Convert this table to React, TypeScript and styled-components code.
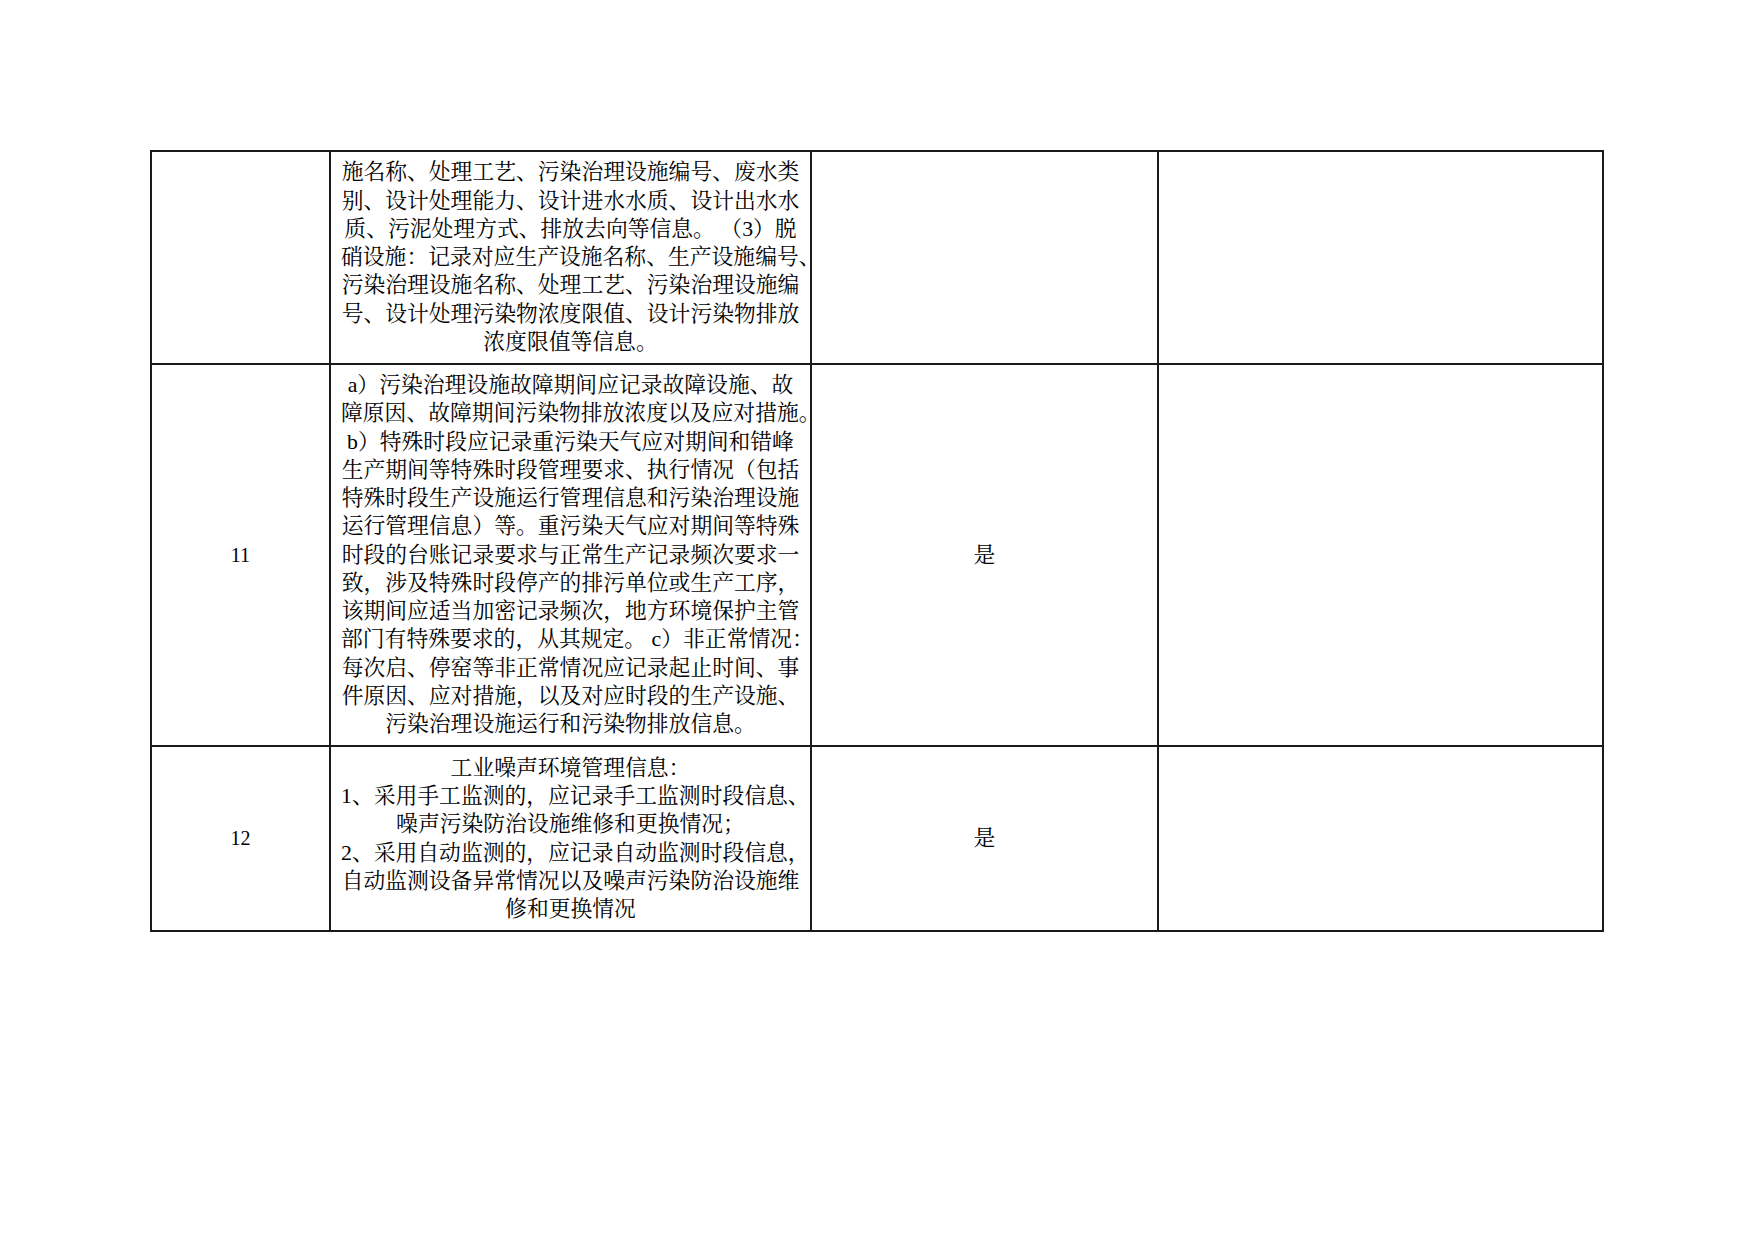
import React from "react";
import styled, { createGlobalStyle } from "styled-components";

const Global = createGlobalStyle`
  html, body { margin: 0; padding: 0; background: #ffffff; }
  body { font-family: "Liberation Serif", "Noto Serif CJK SC", "Noto Sans CJK SC", serif; color: #000; }
`;

const Page = styled.div`
  width: 1754px;
  height: 1241px;
  box-sizing: border-box;
  padding: 150px 0 0 150px;
  background: #fff;
`;

const Table = styled.table`
  border-collapse: collapse;
  table-layout: fixed;
  width: 1454px;
`;

const Row = styled.tr<{ $h: number }>`
  height: ${(p) => p.$h}px;
`;

const Cell = styled.td`
  border: 2px solid #1a1a1a;
  padding: 0 10px;
  vertical-align: middle;
  text-align: center;
  font-size: 21.8px;
  line-height: 28.25px;
  font-family: "Liberation Serif", "Noto Serif CJK SC", "Noto Sans CJK SC", serif;
  color: #000;
  overflow: visible;
`;

const NumCell = styled(Cell)`
  font-size: 20px;
`;

const Line = styled.div`
  white-space: nowrap;
  text-align: center;
`;

type RowData = { no: string; lines: string[]; answer: string; h: number };

const rows: RowData[] = [
  {
    no: "",
    h: 212.5,
    answer: "",
    lines: [
      "施名称、处理工艺、污染治理设施编号、废水类",
      "别、设计处理能力、设计进水水质、设计出水水",
      "质、污泥处理方式、排放去向等信息。 （3）脱",
      "硝设施：记录对应生产设施名称、生产设施编号、",
      "污染治理设施名称、处理工艺、污染治理设施编",
      "号、设计处理污染物浓度限值、设计污染物排放",
      "浓度限值等信息。",
    ],
  },
  {
    no: "11",
    h: 382.5,
    answer: "是",
    lines: [
      " a）污染治理设施故障期间应记录故障设施、故",
      "障原因、故障期间污染物排放浓度以及应对措施。",
      " b）特殊时段应记录重污染天气应对期间和错峰",
      "生产期间等特殊时段管理要求、执行情况（包括",
      "特殊时段生产设施运行管理信息和污染治理设施",
      "运行管理信息）等。重污染天气应对期间等特殊",
      "时段的台账记录要求与正常生产记录频次要求一",
      "致，涉及特殊时段停产的排污单位或生产工序，",
      "该期间应适当加密记录频次，地方环境保护主管",
      "部门有特殊要求的，从其规定。 c）非正常情况：",
      "每次启、停窑等非正常情况应记录起止时间、事",
      "件原因、应对措施，以及对应时段的生产设施、",
      "污染治理设施运行和污染物排放信息。",
    ],
  },
  {
    no: "12",
    h: 185,
    answer: "是",
    lines: [
      "工业噪声环境管理信息：",
      "1、采用手工监测的，应记录手工监测时段信息、",
      "噪声污染防治设施维修和更换情况；",
      "2、采用自动监测的，应记录自动监测时段信息，",
      "自动监测设备异常情况以及噪声污染防治设施维",
      "修和更换情况",
    ],
  },
];

export default function App() {
  return (
    <Page>
      <Global />
      <Table>
        <colgroup>
          <col style={{ width: 179 }} />
          <col style={{ width: 481 }} />
          <col style={{ width: 347 }} />
          <col style={{ width: 445 }} />
        </colgroup>
        <tbody>
          {rows.map((r, i) => (
            <Row key={i} $h={r.h}>
              <NumCell>{r.no}</NumCell>
              <Cell>
                {r.lines.map((l, j) => (
                  <Line key={j}>{l}</Line>
                ))}
              </Cell>
              <Cell>{r.answer}</Cell>
              <Cell />
            </Row>
          ))}
        </tbody>
      </Table>
    </Page>
  );
}
